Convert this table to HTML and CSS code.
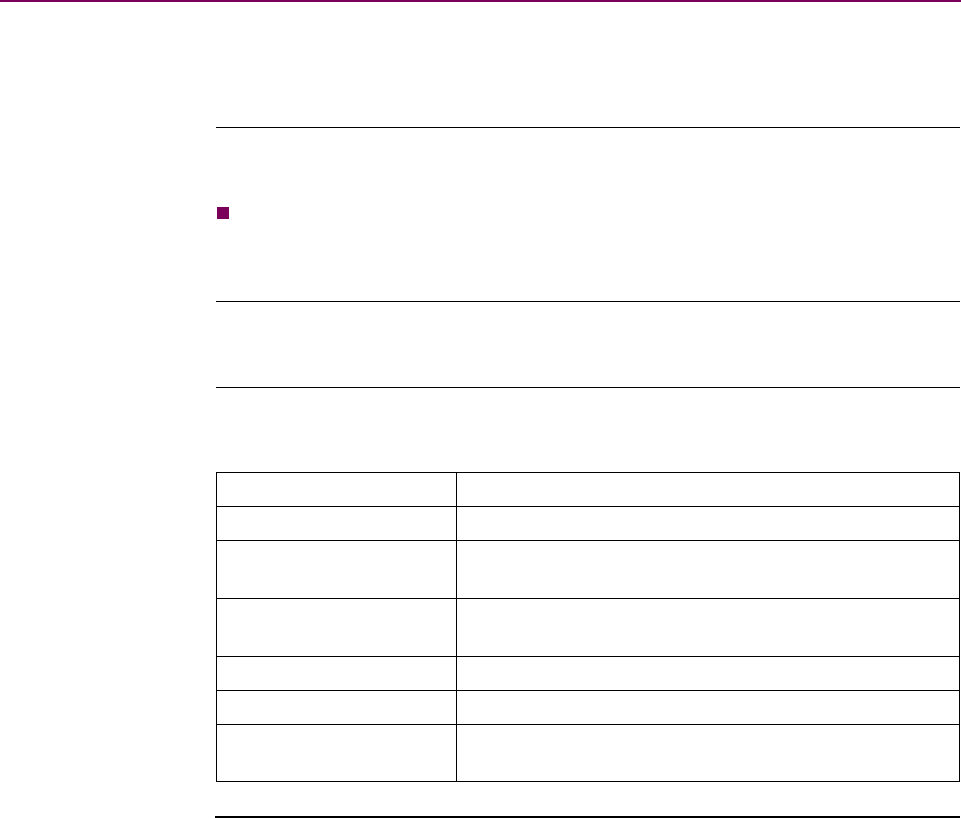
FILE: index.html
```html
<!DOCTYPE html>
<html>
<head>
<meta charset="utf-8">
<link rel="stylesheet" href="styles.css">
</head>
<body>
<div class="topbar"></div>
<main class="page">
  <div class="rule rule-1"></div>
  <div class="bullet"></div>
  <div class="rule rule-2"></div>
  <div class="rule rule-3"></div>
  <div class="table">
    <div class="cell c1 h34"></div><div class="cell c2 h34"></div>
    <div class="cell c1 h34"></div><div class="cell c2 h34"></div>
    <div class="cell c1 h58"></div><div class="cell c2 h58"></div>
    <div class="cell c1 h58"></div><div class="cell c2 h58"></div>
    <div class="cell c1 h34"></div><div class="cell c2 h34"></div>
    <div class="cell c1 h34"></div><div class="cell c2 h34"></div>
    <div class="cell c1 h57"></div><div class="cell c2 h57"></div>
  </div>
  <div class="footrule"></div>
</main>
</body>
</html>
```

FILE: styles.css
```css
html, body {
  margin: 0;
  padding: 0;
  background: #ffffff;
  font-family: "Liberation Sans", Arial, sans-serif;
}
.topbar {
  height: 2px;
  background: #7a005a;
}
.page {
  margin-left: 216px;
  width: 744px;
  display: flex;
  flex-direction: column;
}
.rule {
  height: 1px;
  background: #000;
}
.rule-1 { margin-top: 125px; }
.bullet {
  margin-top: 79px;
  margin-left: 1px;
  width: 12px;
  height: 12px;
  background: #7a005a;
}
.rule-2 { margin-top: 82px; }
.rule-3 { margin-top: 85px; }
.table {
  margin-top: 84px;
  display: grid;
  grid-template-columns: 240px 503px;
  border-top: 1px solid #000;
  border-left: 1px solid #000;
}
.cell {
  box-sizing: border-box;
  border-right: 1px solid #000;
  border-bottom: 1px solid #000;
}
.h34 { height: 34px; }
.h58 { height: 58px; }
.h57 { height: 57px; }
.footrule {
  margin-top: 34px;
  margin-left: -1px;
  width: 745px;
  height: 2px;
  background: #000;
}
```
